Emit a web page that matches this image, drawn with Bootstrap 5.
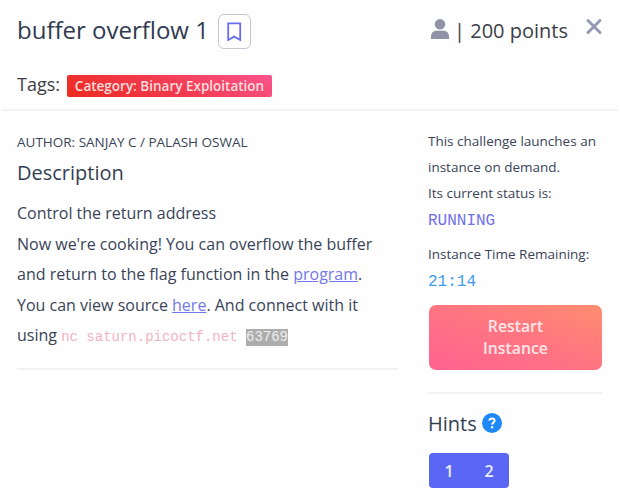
<!DOCTYPE html>
<html lang="en">
<head>
<meta charset="utf-8">
<meta name="viewport" content="width=device-width, initial-scale=1">
<title>buffer overflow 1</title>
<link href="https://cdn.jsdelivr.net/npm/bootstrap@5.3.0/dist/css/bootstrap.min.css" rel="stylesheet">
<style>
body{font-family:"Open Sans","Noto Sans",sans-serif;font-size:16px;line-height:30.4px;color:#3a4458;background:#fefefe;overflow:hidden}
.challenge-head{height:111px;margin:0 2px;padding:13px 16px 0 15px;border-bottom:2px solid #f3f3f5}
.title{font-size:24px;line-height:34px;color:#303a50}
.save{width:33px;height:35px;margin:1px 0 0 9px;border:1px solid #c4c9d0;border-radius:6px;background:#fff}
.tags{margin-top:18px;font-size:18px;line-height:34px;color:#3d3d43}
.category{font-size:13.5px;line-height:22px;height:22px;width:205px;margin:3px 0 0 7px;border-radius:2px;font-weight:600;color:#ffdede;background:linear-gradient(25deg,#ec2a1c 0%,#f23b50 50%,#f9548e 100%)}
.points{font-size:20px;line-height:36px;color:#3b3d46}
.person{margin:5px 5px 0 0}
.main-col{width:381px;margin-left:17px;padding-top:18px}
.side-col{width:174px;margin-left:30px;padding-top:18.4px;font-size:13.5px;line-height:25.6px}
.author{font-size:13.5px;line-height:26px}
.heading{font-size:20px;line-height:30px;color:#343e52}
.description-title{margin-top:3px}
.rule{height:2px;background:#f1f1f3}
.body-link{color:#7379ea}
.mono{font-family:"Liberation Mono",monospace}
.command{font-size:14px;color:#f2b3c2}
.picked{background:#adadad;color:#eee;display:inline-block;line-height:17px}
.desc{padding-top:10.4px}
.status{font-size:16px;line-height:30.4px;color:#7171ea}
.status.clock{color:#3f9bee}
.time-label{margin-top:5px}
.restart{width:173px;height:65px;margin:7.4px 0 0 1px;border-radius:7px;font-size:15.8px;line-height:22px;font-weight:600;color:#ffe6e8!important;background:linear-gradient(20deg,#ff6291 0%,#ff7482 50%,#ff8d70 100%)}
.side-rule{margin-top:22px}
.hints-row{margin-top:15px}
.help{margin-left:5px;margin-top:-1px}
.hint-group{width:80px;height:35px;margin:14px 0 0 1px;border-radius:4px;background:#5a67f5}
.hint-btn{width:40px;font-size:16px;line-height:36px;font-weight:600;color:#ececff}
</style>
<script src="https://cdn.jsdelivr.net/npm/bootstrap@5.3.0/dist/js/bootstrap.bundle.min.js"></script>
</head>
<body>
<header class="challenge-head">
  <div class="d-flex align-items-start">
    <h1 class="title fw-normal mb-0 text-nowrap">buffer overflow 1</h1>
    <button class="save p-0 d-flex align-items-center justify-content-center" aria-label="Bookmark">
      <svg width="15" height="20" viewBox="0 0 15 20" fill="none" stroke="#6a6df0" stroke-width="1.8"><path d="M1.2 1.4H13.2V18L7.2 14.6L1.2 18Z"/></svg>
    </button>
    <div class="points d-flex ms-auto text-nowrap">
      <svg class="person" width="18" height="22" viewBox="0 0 18 22" fill="#8f93a5"><circle cx="9" cy="6.2" r="5.2"/><path d="M0 21V18.5C0 15.2 2.2 12.8 5.4 12.8H12.6C15.8 12.8 18 15.2 18 18.5V21Z"/></svg>
      <span>| 200 points</span>
    </div>
    <button class="border-0 bg-transparent p-0 d-flex ms-3 mt-1" aria-label="Close">
      <svg width="18" height="20" viewBox="0 0 18 20" stroke="#9399b4" stroke-width="2.9" stroke-linecap="round"><path d="M4 3.5L16 15.5M16 3.5L4 15.5"/></svg>
    </button>
  </div>
  <div class="tags d-flex align-items-center">Tags:<span class="category badge p-0 text-center">Category: Binary Exploitation</span></div>
</header>
<main class="d-flex">
  <section class="main-col">
    <div class="author">AUTHOR: SANJAY C / PALASH OSWAL</div>
    <h2 class="heading description-title fw-normal mb-0">Description</h2>
    <div class="desc text-nowrap">
      Control the return address<br>
      Now we're cooking! You can overflow the buffer<br>
      and return to the flag function in the <a class="body-link" href="#">program</a>.<br>
      You can view source <a class="body-link" href="#">here</a>. And connect with it<br>
      using <span class="mono command">nc saturn.picoctf.net <span class="picked">63769</span></span>
    </div>
    <div class="rule mt-3"></div>
  </section>
  <aside class="side-col">
    <div class="text-nowrap">This challenge launches an<br>instance on demand.<br>Its current status is:</div>
    <div class="mono status">RUNNING</div>
    <div class="time-label text-nowrap">Instance Time Remaining:</div>
    <div class="mono status clock">21:14</div>
    <button class="restart btn border-0 p-0">Restart<br>Instance</button>
    <div class="rule side-rule"></div>
    <div class="hints-row d-flex align-items-center">
      <h2 class="heading fw-normal mb-0">Hints</h2>
      <svg class="help" width="20" height="20" viewBox="0 0 20 20"><circle cx="10" cy="10" r="10" fill="#1e88f8"/><path d="M7.3 7.7C7.5 6.3 8.4 5.6 10 5.6C11.6 5.6 12.6 6.4 12.6 7.6C12.6 9.5 10.3 9.5 10.1 11.6" fill="none" stroke="#fff" stroke-width="2"/><circle cx="10.1" cy="14.3" r="1.2" fill="#fff"/></svg>
    </div>
    <div class="hint-group d-flex text-center"><span class="hint-btn">1</span><span class="hint-btn">2</span></div>
  </aside>
</main>
</body>
</html>
